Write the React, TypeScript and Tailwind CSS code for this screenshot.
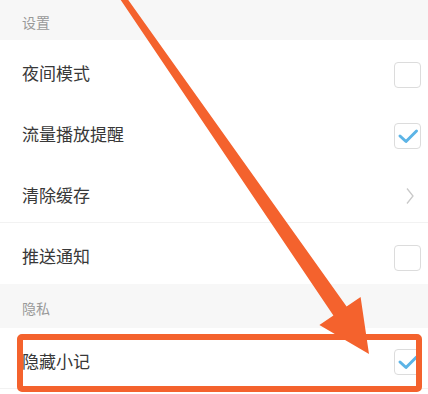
const font = { fontFamily: '"Noto Sans CJK SC", "Noto Sans", sans-serif' };

function Box({ checked }: { checked?: boolean }) {
  return (
    <div className="mt-[3px] flex h-[26px] w-[27px] items-center justify-center rounded-[4px] border-[1.5px] border-[#dcdcdc] bg-white">
      {checked && (
        <svg width="22" height="18" viewBox="0 0 22 18">
          <path d="M3 9 L9 14.5 L19.5 4" fill="none" stroke="#5cb4e6" strokeWidth="3" strokeLinecap="round" strokeLinejoin="round" />
        </svg>
      )}
    </div>
  );
}

function Chevron() {
  return (
    <svg width="10" height="18" viewBox="0 0 10 18" className="mr-[6px] mt-[3px]">
      <path d="M2 1.5 L8 9 L2 16.5" fill="none" stroke="#c9c9c9" strokeWidth="1.3" />
    </svg>
  );
}

function Row({ label, children, border = false }: { label: string; children: React.ReactNode; border?: boolean }) {
  return (
    <div className={"flex h-[61px] items-center justify-between pl-[22px] pr-[7px] pt-[5px] " + (border ? "border-b border-[#f2f2f2]" : "")}>
      <span className="text-[17px] text-[#383838]">{label}</span>
      {children}
    </div>
  );
}

function Section({ title, top }: { title: string; top?: boolean }) {
  return (
    <div className={"flex items-center bg-[#f7f7f7] pl-[22px] pt-1 " + (top ? "h-[40px]" : "h-[44px]")}>
      <span className="text-[14px] text-[#999]">{title}</span>
    </div>
  );
}

export default function App() {
  return (
    <div className="relative h-[394px] w-[428px] overflow-hidden bg-white" style={font}>
      <Section title="设置" top />
      <Row label="夜间模式"><Box /></Row>
      <Row label="流量播放提醒"><Box checked /></Row>
      <Row label="清除缓存" border><Chevron /></Row>
      <Row label="推送通知"><Box /></Row>
      <Section title="隐私" />
      <Row label="隐藏小记" border><Box checked /></Row>

      <svg className="pointer-events-none absolute left-0 top-0" width="428" height="394" viewBox="0 0 428 394">
        <polygon
          points="118.5,-3.3 123.5,-6.7 346.6,306.5 360.6,296.9 369,354 319.4,325.1 333.4,315.5"
          fill="#f4622d"
        />
        <rect x="20" y="337" width="399" height="52" rx="2" fill="none" stroke="#f4622d" strokeWidth="6" />
      </svg>
    </div>
  );
}
